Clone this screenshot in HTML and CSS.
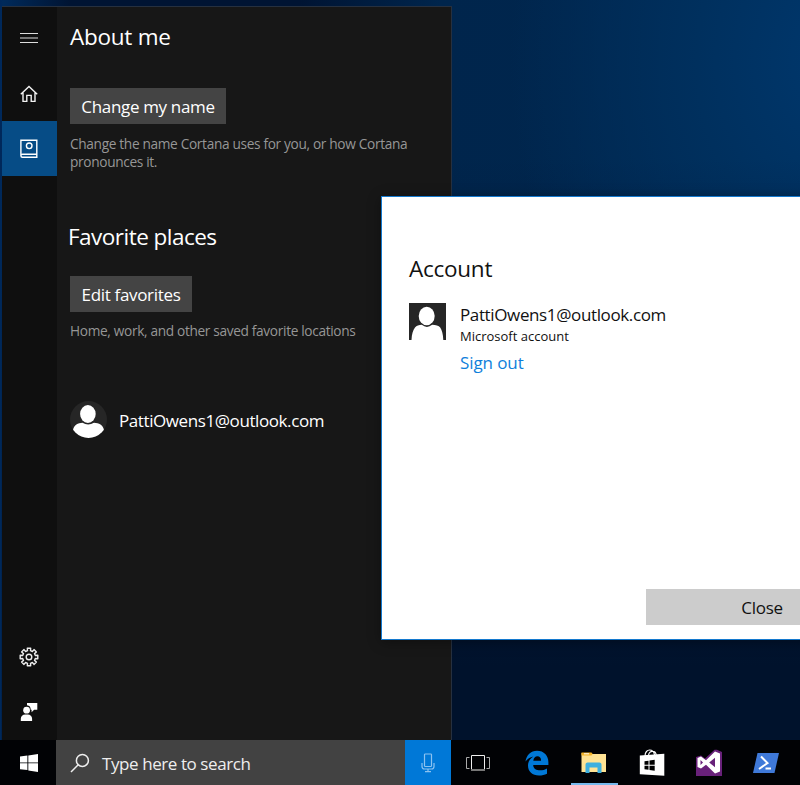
FILE: index.html
```html
<!DOCTYPE html>
<html lang="en">
<head>
<meta charset="utf-8">
<title>About me</title>
<link rel="stylesheet" href="styles.css">
</head>
<body>
<div class="desktop">
  <main class="flyout">
    <nav class="rail">
      <a class="rail-item menu"><svg width="20" height="20" viewBox="0 0 20 20"><path d="M1 5.500h18M1 10h18M1 14.500h18" stroke="#ddd" stroke-width="1.100"/></svg></a>
      <a class="rail-item home"><svg width="20" height="20" viewBox="0 0 20 20" fill="none" stroke="#f2f2f2" stroke-width="1.400"><path d="M1.800 10.200 10 2.400l8.200 7.800M4 8.800v8.600h3.800v-6h4.400v6H16V8.800"/></svg></a>
      <a class="rail-item selected"><svg width="20" height="20" viewBox="0 0 20 20" fill="none" stroke="#fff" stroke-width="1.400"><path d="M1.900 17V1.200h15.900v17.100H3.400a1.500 1.500 0 0 1 0-3h14.400"/><circle cx="10.200" cy="6.800" r="2.800"/></svg></a>
      <span class="spacer"></span>
      <a class="rail-item"><svg width="20" height="20" viewBox="0 0 20 20" fill="none" stroke="#eee" stroke-width="1.400" stroke-linejoin="round"><circle cx="10" cy="10" r="2.800"/><path d="M8.500 3.700 8.300 1.200h3.400l-.2 2.500 1.900.8 1.600-1.900 2.400 2.400-1.900 1.600.8 1.900 2.500-.2v3.400l-2.500-.2-.8 1.900 1.900 1.600-2.400 2.400-1.600-1.900-1.900.8.2 2.500H8.300l.2-2.500-1.900-.8L5 17.400 2.600 15l1.900-1.600-.8-1.900-2.500.2V8.300l2.500.2.8-1.900L2.600 5 5 2.600l1.600 1.900z"/></svg></a>
      <a class="rail-item"><svg width="20" height="20" viewBox="0 0 20 20" fill="#fff"><path d="M8 1h10.300v6.700h-3.200l-2.500 2.500V7.700h-.9A4.300 4.300 0 0 0 8 3.300z"/><circle cx="7.600" cy="8.200" r="3.400"/><path d="M1.800 19v-2.200c0-2.400 2-4.300 4.300-4.300h2.700c2.400 0 4.300 1.900 4.300 4.300V19z"/></svg></a>
    </nav>
    <section class="content">
      <h1>About me</h1>
      <button class="btn btn-name">Change my name</button>
      <p class="hint">Change the name Cortana uses for you, or how Cortana<br>pronounces it.</p>
      <h2>Favorite places</h2>
      <button class="btn btn-fav">Edit favorites</button>
      <p class="hint">Home, work, and other saved favorite locations</p>
      <div class="user">
        <svg width="37" height="37" viewBox="0 0 37 37"><defs><clipPath id="round"><circle cx="18.500" cy="18.500" r="18.500"/></clipPath></defs><g clip-path="url(#round)"><path fill="#262626" d="M0 0h37v37H0z"/><path fill="#fff" d="M3 37V29c1-5 5-7 9.500-7.200q5.500 3.600 11.500 0C29 22 33 24 34 29v8z"/><ellipse cx="17.900" cy="13" rx="7.800" ry="8.900" fill="#fff"/></g></svg>
        <span>PattiOwens1@outlook.com</span>
      </div>
    </section>
  </main>

  <section class="dialog">
    <h2>Account</h2>
    <div class="account">
      <svg width="37" height="37" viewBox="0 0 37 37"><path fill="#262626" d="M0 0h37v37H0z"/><path fill="#fff" d="M2.500 37c.3-6 1.500-10 3.500-12.500 1.500-1.800 4-2.700 6.800-2.700q5 4.200 10.400 0c3.500 0 6.500 1 8 2.700C33 27 34 31 34.300 37z"/><ellipse cx="17.700" cy="13" rx="8" ry="9.200" fill="#fff"/></svg>
      <div class="details">
        <span class="name">PattiOwens1@outlook.com</span>
        <span class="kind">Microsoft account</span>
        <a class="signout">Sign out</a>
      </div>
    </div>
    <button class="close">Close</button>
  </section>

  <footer class="taskbar">
    <div class="start"><svg width="20" height="20" viewBox="0 0 20 20" fill="#fff"><path d="M1 3.600 8.400 2.600v6.800H1zM9.300 2.400 19 1v8.400H9.300zM1 10.300h7.400v6.800L1 16.200zM9.300 10.300H19V19l-9.700-1.500z"/></svg></div>
    <div class="search"><svg width="20" height="20" viewBox="0 0 20 20" fill="none" stroke="#eee" stroke-width="1.500"><circle cx="12.400" cy="7.400" r="6"/><path d="m8.200 11.800-7.200 7.200"/></svg><span>Type here to search</span></div>
    <div class="mic"><svg width="14" height="20" viewBox="0 0 14 20" fill="none" stroke="#8cc2f0" stroke-width="1.200"><rect x="3.500" y="1" width="7" height="12.500" rx=".8"/><path d="M1 10v3.500q0 2.500 2.500 2.500h7q2.500 0 2.500-2.500V10M7 16v2.500M4 18.600h6"/></svg></div>
    <div class="view"><svg width="24" height="18" viewBox="0 0 24 18" fill="none"><path d="M5.500 16.500V1.500h13v15" stroke="#eee"/><path d="M5 16h14" stroke="#777" stroke-width="2"/><path d="M3.500 3.500h-3v11h3M20.500 3.500h3v11h-3" stroke="#aaa"/></svg></div>
    <div class="app"><svg width="24" height="26" viewBox="0 0 24 26"><path fill="#0078d7" d="M.5 11.600C1.400 5.200 5.800.8 12 .8c7 0 11.400 4.900 11.400 11.400v2.800H8.200c.2 4 3.500 5.300 6.800 5.300 2.700 0 5-.7 7-1.900v5.300c-2.300 1.200-5 1.800-8 1.800-6.600 0-11-3.900-11-10 0-4 2-7.300 5.400-9.100C5 7 2.400 8.700.5 11.600zM8.300 10.700h7.800c0-2.900-1.300-4.500-3.700-4.500-2.200 0-3.700 1.700-4.100 4.500z"/></svg></div>
    <div class="app active"><svg width="26" height="22" viewBox="0 0 26 22"><path fill="#ffe394" d="M.5 1h10l1 1H25v18H.5z"/><path fill="#f5b427" d="M.5.500h10l1 1.500-1 1.500H.5z"/><path fill="#fff" d="M3 1.300h5v1H3z"/><path fill="#3eb0df" d="M4.500 21V12.500q0-2 2-2h12q2 0 2 2V21h-4v-5.500h-8V21z"/></svg></div>
    <div class="app"><svg width="26" height="28" viewBox="0 0 26 28"><path d="M6 7C6 3 8.500 1 10.500 1S15 2.500 15.500 6M9.500 7c0-3 2-4.700 4-4.700s3.500 1.500 3.700 3.700" fill="none" stroke="#fff" stroke-width="1.200"/><path fill="#fff" d="M.8 6.500 25.300 4.800v22L.8 25.300z"/><path fill="#000" d="m5.500 12.200 4-.5v4h-4zM10.500 11.500l5.200-.8v5h-5.200zM5.500 16.700h4v4l-4-.5zM10.500 16.700h5.200v5l-5.200-.8z"/></svg></div>
    <div class="app"><svg width="26" height="28" viewBox="0 0 26 28"><path fill="#68217a" d="M0 8l5-1.500L9 9.500 18.500.8h2.500L26 3v24H0z"/><path fill="#fff" fill-rule="evenodd" d="M1.500 9 5 7.500l5 3.700 9-8.700 5 2v18l-5 2-9-8.700L5 19.500 1.500 18zM4.500 11v5L7 13.500zM19 8.800l-5.800 4.700 5.800 4.700z"/></svg></div>
    <div class="app"><svg width="26" height="20" viewBox="0 0 26 20"><path fill="#3f79d9" d="M4.500 0H26l-4.500 20H0z"/><path d="m8 3.500 6.500 6.500L6 16M12.500 15.500h5.500" fill="none" stroke="#fff" stroke-width="2"/></svg></div>
  </footer>
</div>
</body>
</html>
```
FILE: styles.css
```css
* { box-sizing: border-box; }
body { margin: 0; font-family: "Open Sans", "Segoe UI", sans-serif; color: #fff; }
h1, h2, p { margin: 0; font-weight: 400; }
button { border: 0; padding: 0; font: inherit; color: inherit; }
svg { display: block; flex: none; }
h1, h2, p, button, span, a { white-space: nowrap; }

.desktop {
  position: relative;
  width: 800px; height: 785px; overflow: hidden;
  display: flex; flex-direction: column;
  background:
    linear-gradient(90deg, #00285a 1px, #00285a00 3px),
    linear-gradient(#00122c00 20%, #00122c 85%),
    radial-gradient(ellipse 340px 420px at 850px 60px, #00386e 0%, #00305e 45%, #00305e00 100%),
    linear-gradient(90deg, #002b5c 0, #001433 70px, #001433 300px, #00254c 440px, #00274f 100%);
}

.flyout {
  width: 450px; height: 734px; margin: 6px 0 0 1.500px;
  display: flex; border-top: 1px solid #26303f; border-right: 1px solid #26303f;
  background: #171717;
}
.rail { width: 55px; display: flex; flex-direction: column; background: #0f0f0f; }
.rail-item { height: 55px; display: flex; align-items: center; justify-content: center; padding-bottom: .5px; }
.menu { height: 62px; padding: 0; }
.home { height: 52px; padding-bottom: 2px; }
.selected { background: #064c86; padding: 0; }
.spacer { flex: 1; }

.content { padding: 15px 0 0 13.500px; }
h1, h2 { font-size: 22.500px; line-height: 30px; }
h1 { letter-spacing: -.25px; }
.btn { display: block; height: 36px; padding-top: 1px; line-height: 35px; background: #444; font-size: 17px; letter-spacing: -.33px; }
.btn-name { width: 156px; margin-top: 36px; }
.btn-fav { width: 122px; margin-top: 24px; line-height: 34px; }
.hint { margin-top: 11px; font-size: 13.700px; line-height: 17.500px; letter-spacing: -.34px; color: #969696; }
.content h2 { margin: 52px 0 0 -2px; letter-spacing: -.52px; }
.btn-fav + .hint { margin-top: 10px; }
.user { display: flex; align-items: center; gap: 12px; margin-top: 61.500px; font-size: 17px; letter-spacing: -.41px; }
.user span { padding-top: 1px; }

.dialog {
  position: absolute; left: 381px; top: 196px;
  width: 526px; height: 444px; padding: 57px 28px 14px 27px;
  display: flex; flex-direction: column;
  background: #fff; border: 1px solid #1479ce; color: #111;
  box-shadow: 0 2px 12px #00000059;
}
.dialog h2 { letter-spacing: -.25px; }
.account { display: flex; gap: 14px; margin-top: 19px; }
.details { display: flex; flex-direction: column; font-size: 17px; }
.name { padding-top: 1px; line-height: 22px; letter-spacing: -.37px; }
.kind { margin-top: 1px; font-size: 13px; line-height: 18px; }
.signout { margin-top: 7px; line-height: 22px; letter-spacing: -.1px; color: #0f7fdb; }
.close { width: 232px; height: 36px; margin: auto 0 0 auto; background: #ccc; font-size: 17px; letter-spacing: -.3px; }

.taskbar { height: 45px; display: flex; background: #010205; }
.start { width: 56px; display: flex; align-items: center; justify-content: center; padding-left: 2px; }
.search { width: 349px; display: flex; align-items: center; gap: 12px; padding-left: 14px; background: #424242; color: #eee; font-size: 17px; letter-spacing: -.42px; }
.search span { padding-top: 1px; }
.mic { width: 46px; display: flex; align-items: center; justify-content: center; background: #0078d7; }
.view { width: 57px; display: flex; align-items: center; padding-left: 15px; }
.app { width: 47px; margin-right: 10.300px; flex: none; display: flex; align-items: center; justify-content: center; }
.view + .app { margin-left: 5.500px; }
.active { border-bottom: 2px solid #76b9ed; padding-top: 2px; }
```
